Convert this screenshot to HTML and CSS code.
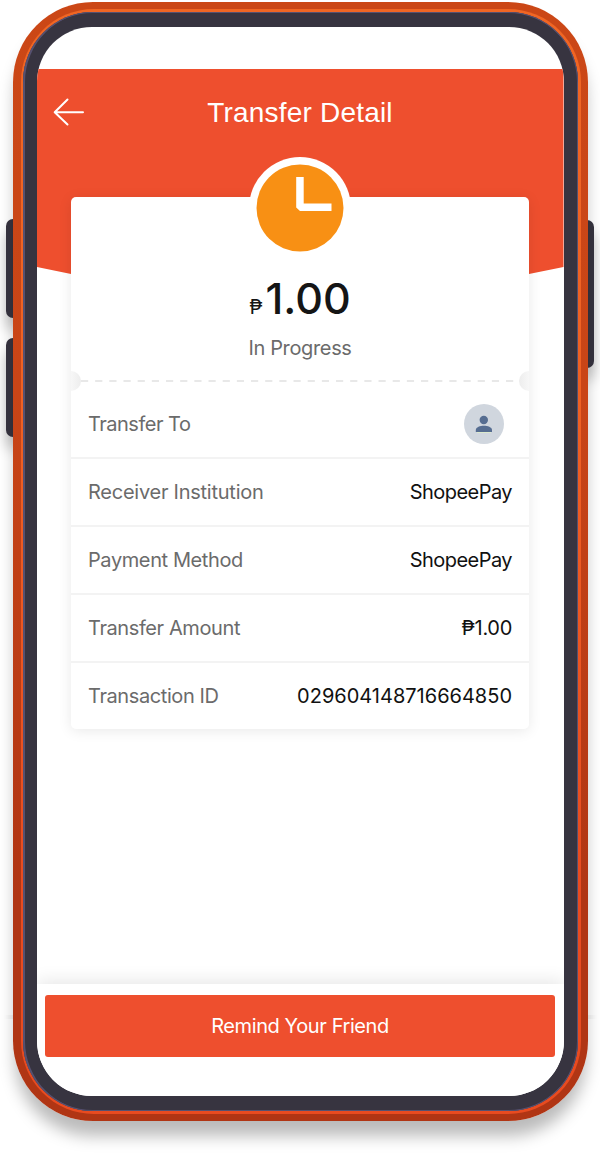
FILE: index.html
```html
<!DOCTYPE html>
<html lang="en">
<head>
    <meta charset="utf-8">
    <title>Transfer Detail</title>
    <link rel="stylesheet" href="styles.css">
</head>
<body>
    <div class="phone">
        <div class="seam"></div>
        <div class="side-button volume-up"></div>
        <div class="side-button volume-down"></div>
        <div class="side-button power"></div>
        <div class="frame">
            <div class="trim">
                <div class="bezel">
                    <div class="screen">
                        <div class="status-bar"></div>
                        <div class="hero">
                            <div class="app-bar">
                                <svg class="back" width="32" height="30" viewBox="0 0 32 30">
                                    <path d="M14.500 2.500L1.700 15.200L14.500 27.500M2 15.200H30" fill="none" stroke="#fff" stroke-width="2" stroke-linecap="round" stroke-linejoin="round"/>
                                </svg>
                                <span class="title">Transfer Detail</span>
                            </div>
                        </div>
                        <div class="card">
                            <div class="summary">
                                <svg class="clock" width="102" height="102" viewBox="0 0 102 102">
                                    <circle cx="51" cy="51" r="51" fill="#fff"/>
                                    <circle cx="51" cy="51" r="43.500" fill="#f89014"/>
                                    <path d="M47.200 20H54.700V46.500H82.500V54H51L47.200 50.500Z" fill="#fff"/>
                                </svg>
                                <div class="amount"><span class="peso">₱</span><span class="number">1.00</span></div>
                                <div class="status">In Progress</div>
                            </div>
                            <div class="divider">
                                <span class="notch notch-left"></span>
                                <svg class="dashes" width="439" height="2" viewBox="0 0 439 2">
                                    <path d="M0 1H439" stroke="#e8e8e8" stroke-width="2" stroke-dasharray="7.200 7"/>
                                </svg>
                                <span class="notch notch-right"></span>
                            </div>
                            <div class="row">
                                <span class="label to">Transfer To</span>
                                <svg class="avatar" width="40" height="40" viewBox="0 0 40 40">
                                    <circle cx="20" cy="20" r="20" fill="#d0d6de"/>
                                    <circle cx="19.800" cy="16" r="4.200" fill="#566d91"/>
                                    <path d="M11.800 28V26C11.800 23.200 16.200 21.800 19.900 21.800S28 23.200 28 26V28Z" fill="#566d91"/>
                                    <path d="M13 28.500H27" stroke="#dce9cd" stroke-width="1"/>
                                </svg>
                            </div>
                            <div class="row">
                                <span class="label institution">Receiver Institution</span>
                                <span class="value">ShopeePay</span>
                            </div>
                            <div class="row">
                                <span class="label">Payment Method</span>
                                <span class="value">ShopeePay</span>
                            </div>
                            <div class="row">
                                <span class="label">Transfer Amount</span>
                                <span class="value peso-value">₱1.00</span>
                            </div>
                            <div class="row">
                                <span class="label">Transaction ID</span>
                                <span class="value number-value">029604148716664850</span>
                            </div>
                        </div>
                        <div class="footer">
                            <div class="button">Remind Your Friend</div>
                        </div>
                    </div>
                </div>
            </div>
        </div>
    </div>
</body>
</html>
```

FILE: styles.css
```css
body {
    margin: 0;
    height: 1160px;
    display: flow-root;
    background-color: #fff;
    font-family: Inter, "Noto Sans", sans-serif;
}
.phone {
    position: relative;
    width: 575px;
    height: 1119px;
    margin: 2px 0 0 13px;
}
.seam {
    position: absolute;
    left: -9px;
    right: -9px;
    top: 1013px;
    height: 4px;
    background: linear-gradient(to right, #fff, #f3f3f3 8px, #f3f3f3 585px, #fff);
}
.side-button {
    position: absolute;
    width: 14px;
    background-color: #373440;
    border-radius: 7px;
    box-shadow: 0 12px 14px rgba(0, 0, 0, 0.25);
}
.volume-up {
    left: -7px;
    top: 217px;
    height: 99px;
}
.volume-down {
    left: -7px;
    top: 336px;
    height: 99px;
}
.power {
    right: -6px;
    top: 218px;
    height: 148px;
}
.frame {
    position: relative;
    box-sizing: border-box;
    height: 1119px;
    padding: 7px 7px 7px 8px;
    border-radius: 80px;
    background: linear-gradient(#cb4716, #c94517 35%, #b03514 80%);
    box-shadow: 0 17px 16px -2px rgba(0, 0, 0, 0.27);
}
.trim {
    box-sizing: border-box;
    height: 1105px;
    padding: 3px 3px 3px 2px;
    border-radius: 73px;
    background: linear-gradient(#f06624, #ef6123 35%, #e84b20 80%);
}
.bezel {
    box-sizing: border-box;
    height: 1099px;
    padding: 15px 14.5px 14px 13.5px;
    border-radius: 70px;
    background-color: #373440;
    box-shadow: inset 2px 0 0 #565170, inset 0 1px 0 #565170, inset 0 -1px 0 #565170, inset -1px 0 0 #565170;
}
.screen {
    display: flex;
    flex-direction: column;
    height: 1069px;
    border-radius: 55px;
    background-color: #fff;
    overflow: hidden;
}
.status-bar {
    height: 42px;
    flex: none;
}
.hero {
    height: 252px;
    flex: none;
    background-color: #ee4f2e;
    clip-path: polygon(0 0, 100% 0, 100% 198px, 50% 252px, 0 198px);
}
.app-bar {
    display: grid;
    grid-template-columns: 32px 1fr 32px;
    align-items: center;
    height: 86px;
    padding: 0 16px;
}
.title {
    padding-top: 2px;
    color: #fff;
    font-family: "Liberation Sans", Arial, sans-serif;
    font-size: 28px;
    letter-spacing: 0.2px;
    text-align: center;
}
.card {
    position: relative;
    flex: none;
    width: 458px;
    height: 532px;
    margin: -124px auto 0;
    border-radius: 5px;
    background-color: #fff;
    box-shadow: 0 2px 14px rgba(0, 0, 0, 0.09);
}
.summary {
    display: flex;
    flex-direction: column;
    align-items: center;
    height: 174px;
}
.clock {
    flex: none;
    margin-top: -40px;
}
.amount {
    display: flex;
    align-items: baseline;
    height: 52px;
    margin-top: 13px;
    line-height: 52px;
    color: #151515;
}
.peso {
    margin-right: 3px;
    font-size: 20px;
}
.number {
    font-size: 43px;
    font-weight: 450;
}
.status {
    margin-top: 11px;
    font-size: 20px;
    letter-spacing: -0.35px;
    line-height: 26px;
    color: #6b6b6b;
}
.divider {
    display: flex;
    justify-content: space-between;
    align-items: center;
    height: 20px;
}
.notch {
    width: 10px;
    height: 20px;
    flex: none;
}
.notch-left {
    border-radius: 0 10px 10px 0;
    background: linear-gradient(to left, #ededed, #f7f7f7);
}
.notch-right {
    border-radius: 10px 0 0 10px;
    background: linear-gradient(to right, #ededed, #f7f7f7);
}
.dashes {
    flex: 1;
    min-width: 0;
}
.row {
    display: flex;
    justify-content: space-between;
    align-items: center;
    box-sizing: border-box;
    height: 68px;
    padding: 0 17px;
    border-bottom: 2px solid #f3f3f3;
    font-size: 20px;
}
.row:last-child {
    height: 66px;
    border-bottom: none;
}
.label {
    letter-spacing: -0.4px;
    color: #6b6b6b;
}
.to {
    letter-spacing: -0.5px;
}
.institution {
    letter-spacing: -0.25px;
}
.value {
    letter-spacing: -0.55px;
    color: #111;
}
.peso-value {
    letter-spacing: -0.3px;
}
.number-value {
    letter-spacing: 0;
}
.avatar {
    margin-right: 8px;
}
.footer {
    box-sizing: border-box;
    height: 112px;
    margin-top: auto;
    padding: 11px 8.5px 0;
    background-color: #fff;
    box-shadow: 0 -4px 16px rgba(0, 0, 0, 0.09);
}
.button {
    height: 62px;
    border-radius: 3px;
    background-color: #ee4f2e;
    color: #fff;
    font-size: 20px;
    letter-spacing: -0.4px;
    line-height: 62px;
    text-align: center;
}
```
